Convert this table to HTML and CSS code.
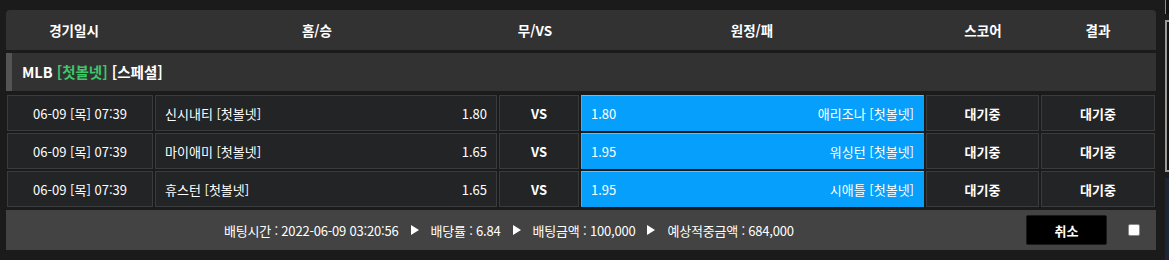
FILE: index.html
```html
<!DOCTYPE html>
<html lang="ko">
<head>
<meta charset="utf-8">
<link rel="stylesheet" href="styles.css">
</head>
<body>
<div class="side-panel"><div class="side-top"></div><div class="side-box"></div><div class="side-bottom"></div></div>
<div class="board">
  <div class="head">
    <div>경기일시</div>
    <div>홈/승</div>
    <div>무/VS</div>
    <div>원정/패</div>
    <div>스코어</div>
    <div>결과</div>
  </div>
  <div class="league">MLB <span class="green">[첫볼넷]</span> [스페셜]</div>
  <div class="rows">
    <div class="row">
      <div class="cell date">06-09 [목] 07:39</div>
      <div class="cell team"><span>신시내티 [첫볼넷]</span><span>1.80</span></div>
      <div class="cell vs">VS</div>
      <div class="cell team sel"><span>1.80</span><span>애리조나 [첫볼넷]</span></div>
      <div class="cell status">대기중</div>
      <div class="cell status">대기중</div>
    </div>
    <div class="row">
      <div class="cell date">06-09 [목] 07:39</div>
      <div class="cell team"><span>마이애미 [첫볼넷]</span><span>1.65</span></div>
      <div class="cell vs">VS</div>
      <div class="cell team sel"><span>1.95</span><span>워싱턴 [첫볼넷]</span></div>
      <div class="cell status">대기중</div>
      <div class="cell status">대기중</div>
    </div>
    <div class="row">
      <div class="cell date">06-09 [목] 07:39</div>
      <div class="cell team"><span>휴스턴 [첫볼넷]</span><span>1.65</span></div>
      <div class="cell vs">VS</div>
      <div class="cell team sel"><span>1.95</span><span>시애틀 [첫볼넷]</span></div>
      <div class="cell status">대기중</div>
      <div class="cell status">대기중</div>
    </div>
  </div>
  <div class="foot">
    <div class="summary">
      <span>배팅시간 : 2022-06-09 03:20:56</span>
      <span class="tri"></span>
      <span>배당률 : 6.84</span>
      <span class="tri"></span>
      <span>배팅금액 : 100,000</span>
      <span class="tri"></span>
      <span>예상적중금액 : 684,000</span>
    </div>
    <button class="cancel">취소</button>
    <span class="check"></span>
  </div>
</div>
</body>
</html>
```
FILE: styles.css
```css
html, body {
  margin: 0;
  padding: 0;
  background: #1b1b1b;
}
body {
  padding: 10px 0 0 6px;
  font-family: "Noto Sans CJK KR", "Noto Sans", sans-serif;
  font-size: 13px;
  color: #fff;
  position: relative;
  height: 250px;
  overflow: hidden;
}
.board {
  width: 1150px;
}
.head {
  display: grid;
  grid-template-columns: 136px 350px 86px 348px 114px 116px;
  height: 40px;
  align-items: center;
  background: #323232;
  border-radius: 4px 4px 0 0;
  font-weight: bold;
  font-size: 13.5px;
  text-align: center;
}
.league {
  margin-top: 3px;
  height: 38px;
  line-height: 38px;
  background: #323232;
  border-left: 6px solid #545454;
  padding-left: 10px;
  font-weight: bold;
  font-size: 14.5px;
}
.green { color: #3ec76a; }
.rows {
  margin-top: 4px;
  display: flex;
  flex-direction: column;
  gap: 2px;
}
.row {
  display: grid;
  grid-template-columns: 146px 342px 80px 343px 113px 114px;
  column-gap: 2px;
  padding-left: 1px;
  height: 36px;
}
.cell {
  background: #232426;
  border: 1px solid #3a3b3c;
  display: flex;
  align-items: center;
  justify-content: center;
  box-sizing: border-box;
}
.team {
  justify-content: space-between;
  padding: 0 9px;
}
.sel {
  background: #069ffc;
  border: 1px solid #069ffc;
  border-top-color: #5cbfff;
  border-left-color: #3fb1ff;
}
.status, .vs { font-weight: bold; }
.foot {
  margin-top: 3px;
  height: 40px;
  background: #434343;
  display: flex;
  align-items: center;
}
.summary {
  margin-left: 218px;
  display: flex;
  align-items: center;
  gap: 12px;
  letter-spacing: -0.2px;
}
.tri {
  width: 0;
  height: 0;
  border-left: 8px solid #fff;
  border-top: 5px solid transparent;
  border-bottom: 5px solid transparent;
}
.cancel {
  margin-left: auto;
  width: 81px;
  height: 30px;
  background: #000;
  border: 1px solid #1a1a1a;
  border-radius: 2px;
  color: #fff;
  font-family: inherit;
  font-size: 13px;
  font-weight: bold;
}
.check {
  width: 10px;
  height: 10px;
  background: #fff;
  border: 1px solid #888;
  border-radius: 2px;
  margin: 0 16px 0 21px;
}
.side-panel {
  position: absolute;
  left: 1165px;
  top: 0;
  width: 4px;
  height: 260px;
}
.side-top {
  height: 14px;
  border-left: 1px solid #8a8a8a;
  background: #111;
}
.side-box {
  margin-top: 6px;
  height: 148px;
  border-left: 2px solid #9a9a9a;
  border-top: 2px solid #9a9a9a;
  border-bottom: 2px solid #9a9a9a;
  background: #111;
}
.side-bottom {
  margin-top: 6px;
  height: 84px;
  background: #1d2636;
}
```
